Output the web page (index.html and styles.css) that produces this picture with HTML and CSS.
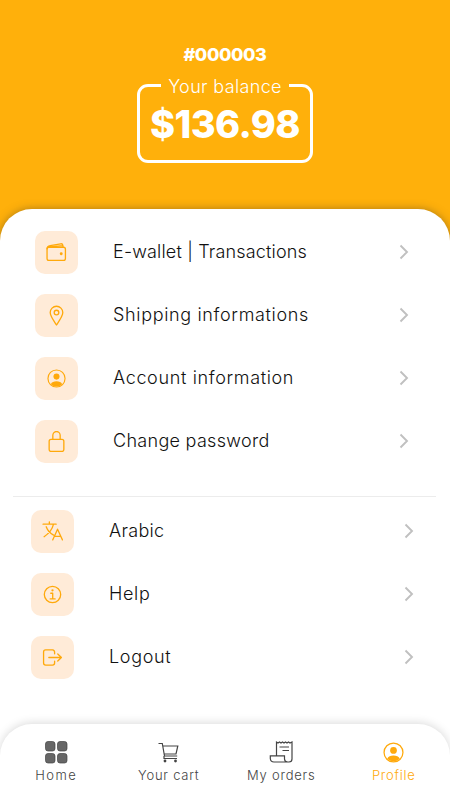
FILE: index.html
```html
<!DOCTYPE html>
<html lang="en">
<head>
<meta charset="utf-8">
<meta name="viewport" content="width=device-width, initial-scale=1">
<title>Profile</title>
<link rel="stylesheet" href="styles.css">
</head>
<body>
<svg class="defs" aria-hidden="true">
  <symbol id="person" viewBox="0 0 20 20">
    <circle cx="10" cy="10" r="9" fill="none" stroke="currentColor" stroke-width="1.2"/>
    <circle cx="10" cy="8" r="3.2" fill="currentColor" stroke="none"/>
    <path d="M4 16c1-2.200 3.200-3.100 6-3.100s5 .9 6 3.100a8.600 8.600 0 0 1-12 0z" fill="currentColor" stroke="none"/>
  </symbol>
  <symbol id="chevron" viewBox="0 0 10 16"><path d="M1.500 1.500 8 8l-6.500 6.500" fill="none" stroke="currentColor" stroke-width="1.900"/></symbol>
</svg>
<div class="screen">
  <header class="header">
    <div class="user-id">#000003</div>
    <fieldset class="balance">
      <legend>Your balance</legend>
      <div class="amount">$136.98</div>
    </fieldset>
  </header>
  <main class="sheet">
    <ul class="menu">
      <li class="item">
        <span class="tile"><svg viewBox="0 0 20 20"><rect x="1" y="5" width="17.500" height="12.500" rx="1.800"/><path d="M1 6.500C1 4.500 2 3.900 4 3.500L14 1.700q1.800-.2 2 1.300l.3 2M2 5l14-1.500"/><circle class="solid" cx="14.500" cy="11.200" r="1.400"/></svg></span>
        <span class="label wallet">E-wallet | Transactions</span><svg class="chevron"><use href="#chevron"/></svg>
      </li>
      <li class="item">
        <span class="tile"><svg viewBox="0 0 20 20"><path d="M10 19C7 14.500 4 10.500 4 7.200a6 6 0 0 1 12 0C16 10.500 13 14.500 10 19z"/><circle cx="10" cy="7.200" r="2.200"/></svg></span>
        <span class="label shipping">Shipping informations</span><svg class="chevron"><use href="#chevron"/></svg>
      </li>
      <li class="item">
        <span class="tile"><svg class="person"><use href="#person"/></svg></span>
        <span class="label account">Account information</span><svg class="chevron"><use href="#chevron"/></svg>
      </li>
      <li class="item">
        <span class="tile"><svg viewBox="0 0 20 20"><rect x="3" y="8" width="14" height="11.500" rx="1.800"/><path d="M6.500 8V4a3.500 3.500 0 0 1 7 0v4"/></svg></span>
        <span class="label password">Change password</span><svg class="chevron"><use href="#chevron"/></svg>
      </li>
    </ul>
    <hr class="divider">
    <ul class="menu secondary">
      <li class="item">
        <span class="tile"><svg viewBox="0 0 20 20"><path d="M1 3h12.500M7 .8V3M11 3C9.800 7.800 6.500 12 2 15M4 5.500c1.300 3.500 3.500 6 7 8M10.200 18 14.800 7.800 19.500 18M11.700 14.700h6.200"/></svg></span>
        <span class="label arabic">Arabic</span><svg class="chevron"><use href="#chevron"/></svg>
      </li>
      <li class="item">
        <span class="tile"><svg viewBox="0 0 20 20"><circle cx="10" cy="10" r="7.800"/><circle class="solid" cx="10" cy="6" r="1.100"/><path d="M8.300 8.800h1.900V14M7.800 14.200h4.700"/></svg></span>
        <span class="label help">Help</span><svg class="chevron"><use href="#chevron"/></svg>
      </li>
      <li class="item">
        <span class="tile"><svg viewBox="0 0 20 20"><path d="M12 6.500V5q0-2-2-2.200H3.500q-2 0-2 2v10.400q0 2 2 2H10q2 0 2-2v-1.700M6.500 10H18.500M15 6.700 18.500 10 15 13.300"/></svg></span>
        <span class="label logout">Logout</span><svg class="chevron"><use href="#chevron"/></svg>
      </li>
    </ul>
  </main>
  <nav class="tabs">
    <a class="tab home"><svg viewBox="0 0 24 24"><g fill="#666" stroke="#444" stroke-width=".7"><rect x="1.500" y="1.500" width="9.500" height="9.500" rx="2.500"/><rect x="13.500" y="1.500" width="9.500" height="9.500" rx="2.500"/><rect x="1.500" y="13.500" width="9.500" height="9.500" rx="2.500"/><rect x="13.500" y="13.500" width="9.500" height="9.500" rx="2.500"/></g></svg><span>Home</span></a>
    <a class="tab cart"><svg viewBox="0 0 24 24"><path d="M1.500 3.500h3.800L7.500 16h12.700M5.800 6H20.800L19 14H7.200M7 16v2.500h13"/><circle class="solid" cx="8" cy="21" r="1.400"/><circle class="solid" cx="18.500" cy="21" r="1.400"/></svg><span>Your cart</span></a>
    <a class="tab orders"><svg viewBox="0 0 24 24"><path d="M7.500 15.500V2l1.500 1 1.500-1L12 3l1.500-1L15 3l1.500-1L18 3l1.500-1L21 3l2-1v17q0 3-3 3H5q-3.500 0-3.700-3.500v-2.700H15.500V19q.2 3 3.200 3M10.500 7h9.500M13.500 10.500H20"/></svg><span>My orders</span></a>
    <a class="tab profile"><svg class="person"><use href="#person"/></svg><span>Profile</span></a>
  </nav>
</div>
</body>
</html>
```
FILE: styles.css
```css
* { box-sizing: border-box; }
body { margin: 0; font-family: Inter, "Open Sans", sans-serif; background: #fff; }
.defs { display: none; }
.screen { width: 450px; height: 800px; display: flex; flex-direction: column; overflow: hidden; background: #ffb00b; }
.header { height: 209px; flex: none; display: flex; flex-direction: column; align-items: center; color: #fff; padding-top: 44px; }
.user-id { height: 22px; font-size: 18px; line-height: 22px; font-weight: 800; letter-spacing: -.4px; white-space: nowrap; }
.balance { width: 176px; height: 87px; margin: 10px 0 0; padding: 0; border: 3px solid #fff; border-radius: 11px; text-align: center; }
.balance legend { width: 128px; height: 19px; margin: 0 auto; padding: 0; font-size: 18px; line-height: 22px; font-weight: 300; letter-spacing: .35px; white-space: nowrap; }
.amount { margin-top: 6px; font-size: 38px; line-height: 46px; font-weight: 800; letter-spacing: -.6px; }
.sheet { flex: 1; margin-bottom: -76px; padding-top: 21px; background: #fff; border-radius: 32px 32px 0 0; box-shadow: 0 0 9px rgba(90, 70, 30, .5); }
.menu { list-style: none; margin: 0; padding: 0 41px 0 35px; display: grid; gap: 19px; }
.item { display: flex; align-items: center; height: 44px; }
.tile { width: 43px; height: 43px; display: flex; align-items: center; justify-content: center; border-radius: 10px; background: #ffebd8; color: #ffa90b; }
.tile svg { width: 21px; height: 21px; fill: none; stroke: currentColor; stroke-width: 1.25; stroke-linecap: round; stroke-linejoin: round; }
.tile .person { width: 19px; height: 19px; }
svg .solid { fill: currentColor; stroke: none; }
.label { margin-left: 35px; flex: 1; font-size: 18px; line-height: 24px; font-weight: 300; color: #111; white-space: nowrap; }
.wallet { letter-spacing: .17px; }
.shipping { letter-spacing: .66px; }
.account { letter-spacing: .65px; }
.password { letter-spacing: .3px; }
.arabic { letter-spacing: .3px; }
.help, .logout { letter-spacing: .65px; }
.chevron { width: 10px; height: 16px; color: #c0c0c0; }
.divider { width: 423px; height: 1px; margin: 33px 0 12px 13px; border: 0; background: #ececec; }
.secondary { padding: 0 36px 0 31px; }
.tabs { position: relative; height: 76px; flex: none; display: flex; background: #fff; border-radius: 32px 32px 0 0; box-shadow: 0 -1px 10px rgba(0, 0, 0, .15); }
.tab { width: 112.500px; display: flex; flex-direction: column; align-items: center; padding-top: 16px; font-size: 13px; line-height: 18px; font-weight: 300; letter-spacing: .75px; color: #444; white-space: nowrap; }
.home { letter-spacing: 1.4px; }
.tab svg { width: 24px; height: 24px; margin-bottom: 2px; fill: none; stroke: currentColor; stroke-width: 1.2; }
.tab .person { width: 21px; height: 21px; margin: 2px 0 3px; }
.tab.profile { color: #ffa90b; }
```
